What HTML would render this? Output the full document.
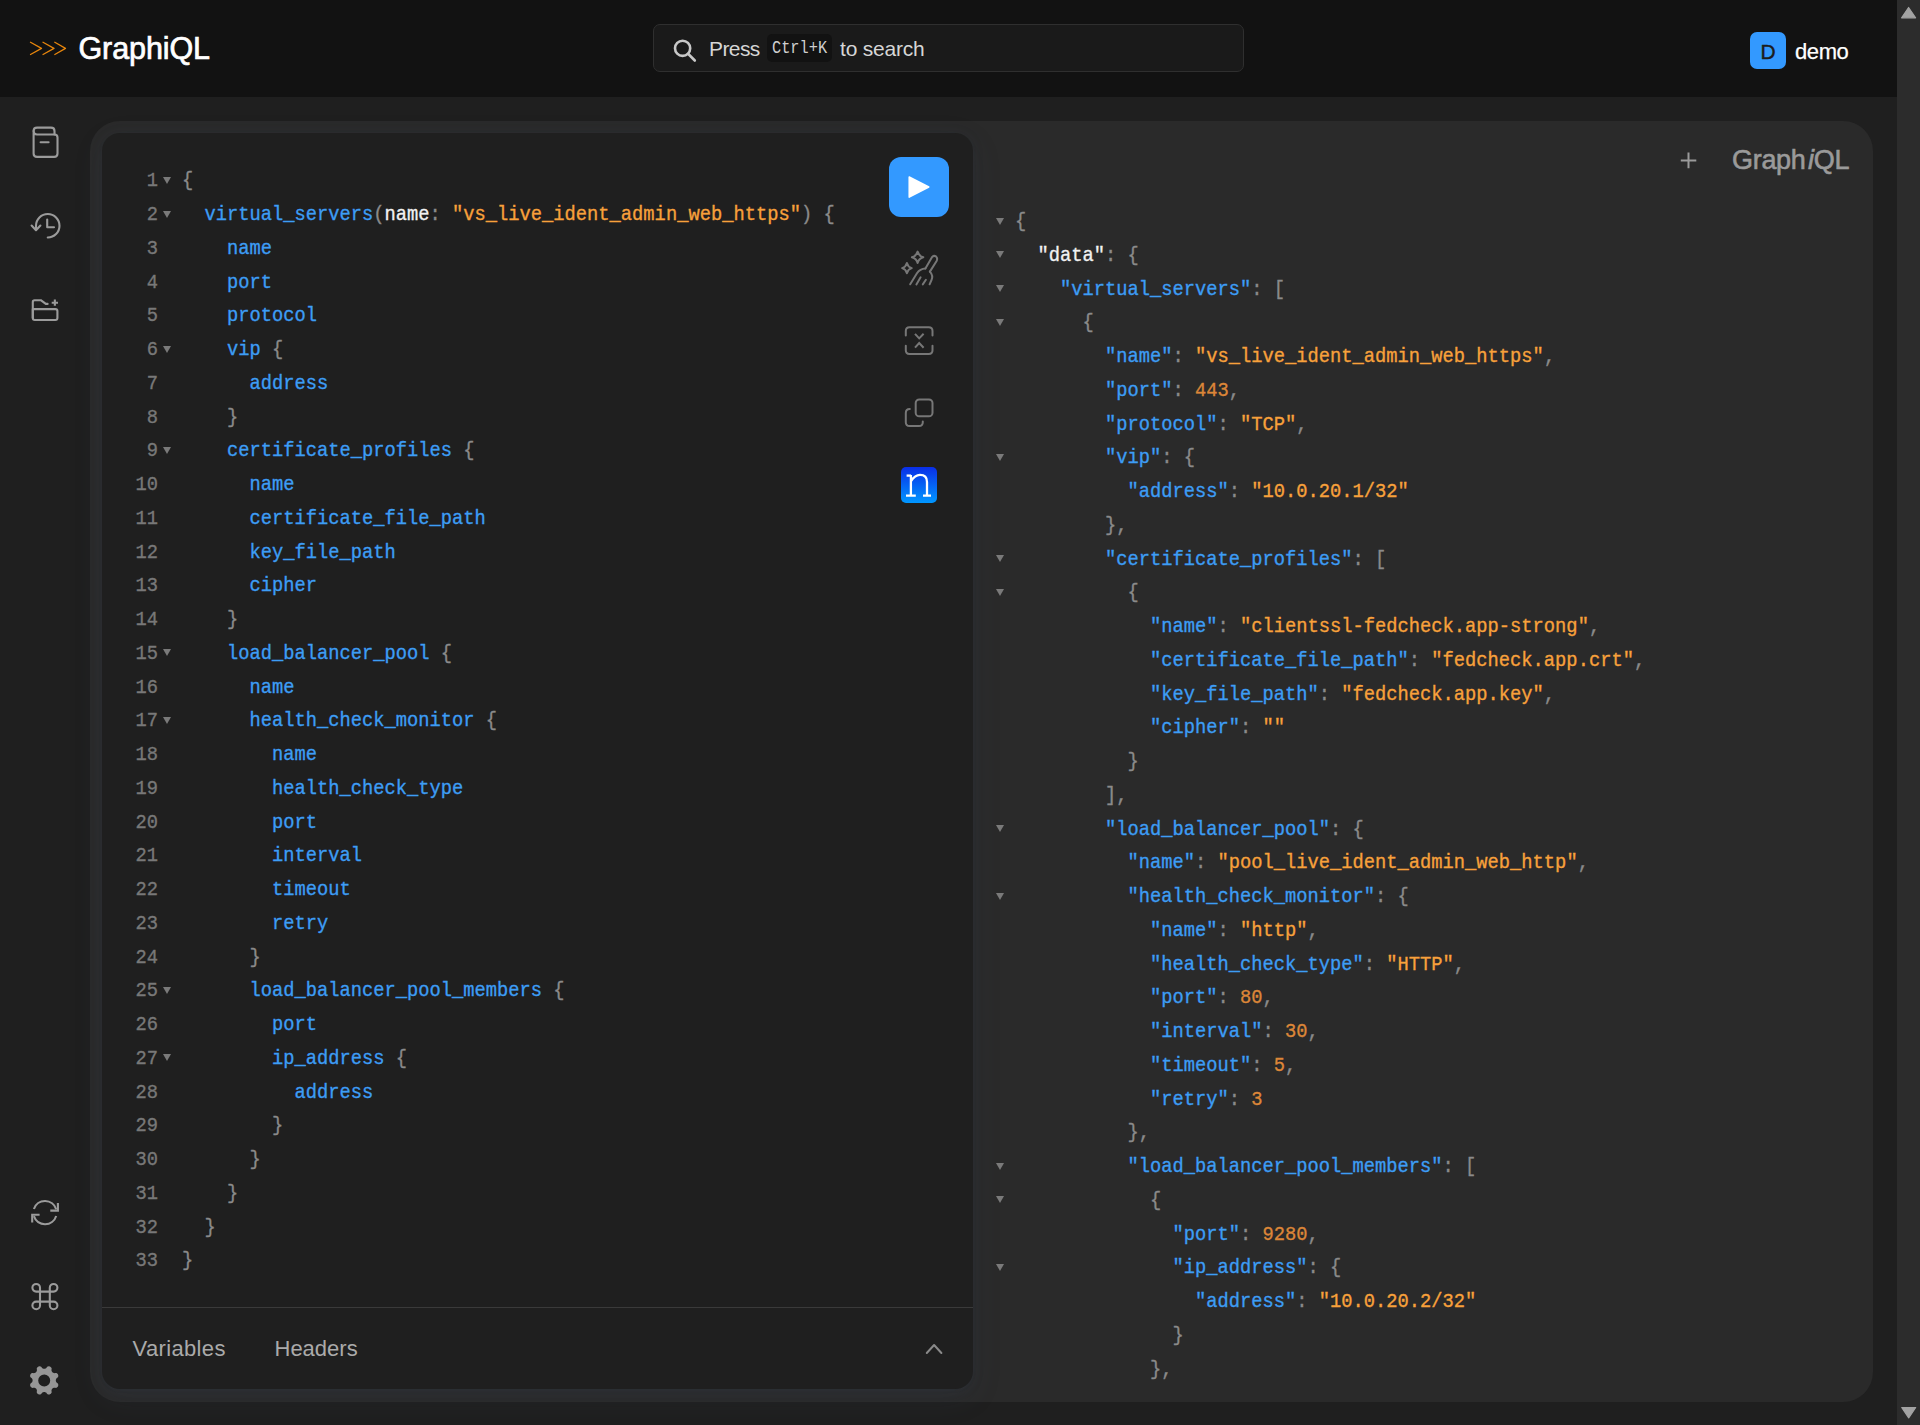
<!DOCTYPE html>
<html><head><meta charset="utf-8">
<style>
html,body{margin:0;padding:0;}
body{width:1920px;height:1425px;overflow:hidden;background:#1f1f1f;position:relative;font-family:"Liberation Sans",sans-serif;}
.abs{position:absolute;}
#hdr{position:absolute;left:0;top:0;width:1897px;height:97px;background:#121212;}
#sb{position:absolute;left:1897px;top:0;width:23px;height:1425px;background:#2c2c2c;}
#sess{position:absolute;left:90px;top:121px;width:1783px;height:1281px;background:#2a2a2a;border-radius:30px;}
#ed{position:absolute;left:102px;top:133px;width:871px;height:1256px;background:#1f1f1f;border-radius:18px;
  box-shadow:0 9px 30px rgba(59,76,106,0.13),0 1.8px 13px rgba(59,76,106,0.077),0 0.5px 4px rgba(59,76,106,0.05);}
#sep{position:absolute;left:102px;top:1307px;width:871px;height:1px;background:#3a3a3a;}
.code{position:absolute;font-family:"Liberation Mono",monospace;font-size:21px;line-height:33.75px;white-space:pre;transform:scaleX(0.89286);transform-origin:0 0;-webkit-text-stroke:0.35px currentColor;}
.code i{font-style:normal;}
.code .p{color:#8a8a8a;}
.code .f{color:#3d9df5;}
.code .k{color:#3d9df5;}
.code .a{color:#f2f2f2;}
.code .w{color:#f2f2f2;}
.code .s{color:#f8a13b;}
.code .n{color:#dc8638;}
.gut{position:absolute;font-family:"Liberation Mono",monospace;font-size:21px;line-height:33.75px;text-align:right;color:#787878;transform:scaleX(0.89286);transform-origin:100% 0;-webkit-text-stroke:0.35px currentColor;}
.fold{position:absolute;width:0;height:0;border-left:4.5px solid transparent;border-right:4.5px solid transparent;border-top:7px solid #7a7a7a;}
.txt{position:absolute;white-space:pre;line-height:1;}
</style></head><body>
<div id="hdr"></div>
<div id="sb"></div>
<div id="sess"></div>
<div id="ed"></div>
<div id="sep"></div>

<!-- header -->
<div class="abs" style="left:653px;top:24px;width:589px;height:46px;border:1px solid #2f2f2f;border-radius:7px;background:#1a1a1a;"></div>
<div class="abs" style="left:767px;top:34px;width:65px;height:28px;border-radius:5px;background:#121212;"></div>
<div class="txt" id="tPress" style="left:709px;top:38px;font-size:21px;letter-spacing:-0.6px;color:#d6d6d6;">Press</div>
<div class="txt" id="tCtrl" style="left:772px;top:38.5px;font-size:18px;transform:scaleX(0.85);transform-origin:0 0;color:#cfcfcf;font-family:'Liberation Mono',monospace;">Ctrl+K</div>
<div class="txt" id="tSearch" style="left:840px;top:38px;font-size:21px;letter-spacing:-0.2px;color:#d6d6d6;">to search</div>
<div class="txt" id="tLogo" style="left:78.5px;top:33px;font-size:30.5px;letter-spacing:-0.1px;color:#ffffff;-webkit-text-stroke:0.7px #fff;">GraphiQL</div>
<div class="abs" style="left:1750px;top:32px;width:36px;height:37px;border-radius:7px;background:#3399ff;"></div>
<div class="txt" id="tD" style="left:1760.5px;top:40.5px;font-size:21px;color:#1c1c1c;-webkit-text-stroke:0.4px #1c1c1c;">D</div>
<div class="txt" id="tDemo" style="left:1795px;top:40.5px;font-size:22px;letter-spacing:-0.4px;color:#ffffff;-webkit-text-stroke:0.25px #fff;">demo</div>

<!-- results header -->
<div class="txt" id="tGq" style="left:1732px;top:147px;font-size:27px;color:#9a9a9a;letter-spacing:-0.3px;-webkit-text-stroke:0.6px #9a9a9a;">Graph<span style="font-style:italic;margin-left:2.5px">i</span>QL</div>

<!-- bottom tabs -->
<div class="txt" id="tVar" style="left:132.5px;top:1337.5px;font-size:22px;letter-spacing:0.35px;color:#aaaaaa;">Variables</div>
<div class="txt" id="tHdr" style="left:274.5px;top:1337.5px;font-size:22px;color:#aaaaaa;">Headers</div>

<!-- run button -->
<div class="abs" style="left:889px;top:157px;width:60px;height:60px;border-radius:12px;background:#3399ff;"></div>
<!-- n icon -->
<div class="abs" style="left:901px;top:467px;width:36px;height:36px;border-radius:5px;background:linear-gradient(#0a2ee8,#0097ff);"></div>

<div class="gut" style="left:98px;top:164.4px;width:60px"><div class="gn">1</div><div class="gn">2</div><div class="gn">3</div><div class="gn">4</div><div class="gn">5</div><div class="gn">6</div><div class="gn">7</div><div class="gn">8</div><div class="gn">9</div><div class="gn">10</div><div class="gn">11</div><div class="gn">12</div><div class="gn">13</div><div class="gn">14</div><div class="gn">15</div><div class="gn">16</div><div class="gn">17</div><div class="gn">18</div><div class="gn">19</div><div class="gn">20</div><div class="gn">21</div><div class="gn">22</div><div class="gn">23</div><div class="gn">24</div><div class="gn">25</div><div class="gn">26</div><div class="gn">27</div><div class="gn">28</div><div class="gn">29</div><div class="gn">30</div><div class="gn">31</div><div class="gn">32</div><div class="gn">33</div></div>
<div class="fold" style="left:162.80px;top:176.88px"></div><div class="fold" style="left:162.80px;top:210.62px"></div><div class="fold" style="left:162.80px;top:345.62px"></div><div class="fold" style="left:162.80px;top:446.88px"></div><div class="fold" style="left:162.80px;top:649.38px"></div><div class="fold" style="left:162.80px;top:716.88px"></div><div class="fold" style="left:162.80px;top:986.88px"></div><div class="fold" style="left:162.80px;top:1054.38px"></div>
<div class="code q" style="left:181.5px;top:164.4px"><div class="ln"><i class="p">{</i></div><div class="ln">  <i class="f">virtual_servers</i><i class="p">(</i><i class="a">name</i><i class="p">: </i><i class="s">&quot;vs_live_ident_admin_web_https&quot;</i><i class="p">) {</i></div><div class="ln">    <i class="f">name</i></div><div class="ln">    <i class="f">port</i></div><div class="ln">    <i class="f">protocol</i></div><div class="ln">    <i class="f">vip</i><i class="p"> {</i></div><div class="ln">      <i class="f">address</i></div><div class="ln">    <i class="p">}</i></div><div class="ln">    <i class="f">certificate_profiles</i><i class="p"> {</i></div><div class="ln">      <i class="f">name</i></div><div class="ln">      <i class="f">certificate_file_path</i></div><div class="ln">      <i class="f">key_file_path</i></div><div class="ln">      <i class="f">cipher</i></div><div class="ln">    <i class="p">}</i></div><div class="ln">    <i class="f">load_balancer_pool</i><i class="p"> {</i></div><div class="ln">      <i class="f">name</i></div><div class="ln">      <i class="f">health_check_monitor</i><i class="p"> {</i></div><div class="ln">        <i class="f">name</i></div><div class="ln">        <i class="f">health_check_type</i></div><div class="ln">        <i class="f">port</i></div><div class="ln">        <i class="f">interval</i></div><div class="ln">        <i class="f">timeout</i></div><div class="ln">        <i class="f">retry</i></div><div class="ln">      <i class="p">}</i></div><div class="ln">      <i class="f">load_balancer_pool_members</i><i class="p"> {</i></div><div class="ln">        <i class="f">port</i></div><div class="ln">        <i class="f">ip_address</i><i class="p"> {</i></div><div class="ln">          <i class="f">address</i></div><div class="ln">        <i class="p">}</i></div><div class="ln">      <i class="p">}</i></div><div class="ln">    <i class="p">}</i></div><div class="ln">  <i class="p">}</i></div><div class="ln"><i class="p">}</i></div></div>
<div class="fold" style="left:995.80px;top:217.67px"></div><div class="fold" style="left:995.80px;top:251.42px"></div><div class="fold" style="left:995.80px;top:285.18px"></div><div class="fold" style="left:995.80px;top:318.93px"></div><div class="fold" style="left:995.80px;top:453.93px"></div><div class="fold" style="left:995.80px;top:555.18px"></div><div class="fold" style="left:995.80px;top:588.93px"></div><div class="fold" style="left:995.80px;top:825.18px"></div><div class="fold" style="left:995.80px;top:892.68px"></div><div class="fold" style="left:995.80px;top:1162.67px"></div><div class="fold" style="left:995.80px;top:1196.42px"></div><div class="fold" style="left:995.80px;top:1263.92px"></div>
<div class="code r" style="left:1014.8px;top:205.2px"><div class="ln"><i class="p">{</i></div><div class="ln">  <i class="w">&quot;data&quot;</i><i class="p">: {</i></div><div class="ln">    <i class="k">&quot;virtual_servers&quot;</i><i class="p">: </i><i class="p">[</i></div><div class="ln">      <i class="p">{</i></div><div class="ln">        <i class="k">&quot;name&quot;</i><i class="p">: </i><i class="s">&quot;vs_live_ident_admin_web_https&quot;</i><i class="p">,</i></div><div class="ln">        <i class="k">&quot;port&quot;</i><i class="p">: </i><i class="n">443</i><i class="p">,</i></div><div class="ln">        <i class="k">&quot;protocol&quot;</i><i class="p">: </i><i class="s">&quot;TCP&quot;</i><i class="p">,</i></div><div class="ln">        <i class="k">&quot;vip&quot;</i><i class="p">: </i><i class="p">{</i></div><div class="ln">          <i class="k">&quot;address&quot;</i><i class="p">: </i><i class="s">&quot;10.0.20.1/32&quot;</i></div><div class="ln">        <i class="p">},</i></div><div class="ln">        <i class="k">&quot;certificate_profiles&quot;</i><i class="p">: </i><i class="p">[</i></div><div class="ln">          <i class="p">{</i></div><div class="ln">            <i class="k">&quot;name&quot;</i><i class="p">: </i><i class="s">&quot;clientssl-fedcheck.app-strong&quot;</i><i class="p">,</i></div><div class="ln">            <i class="k">&quot;certificate_file_path&quot;</i><i class="p">: </i><i class="s">&quot;fedcheck.app.crt&quot;</i><i class="p">,</i></div><div class="ln">            <i class="k">&quot;key_file_path&quot;</i><i class="p">: </i><i class="s">&quot;fedcheck.app.key&quot;</i><i class="p">,</i></div><div class="ln">            <i class="k">&quot;cipher&quot;</i><i class="p">: </i><i class="s">&quot;&quot;</i></div><div class="ln">          <i class="p">}</i></div><div class="ln">        <i class="p">],</i></div><div class="ln">        <i class="k">&quot;load_balancer_pool&quot;</i><i class="p">: </i><i class="p">{</i></div><div class="ln">          <i class="k">&quot;name&quot;</i><i class="p">: </i><i class="s">&quot;pool_live_ident_admin_web_http&quot;</i><i class="p">,</i></div><div class="ln">          <i class="k">&quot;health_check_monitor&quot;</i><i class="p">: </i><i class="p">{</i></div><div class="ln">            <i class="k">&quot;name&quot;</i><i class="p">: </i><i class="s">&quot;http&quot;</i><i class="p">,</i></div><div class="ln">            <i class="k">&quot;health_check_type&quot;</i><i class="p">: </i><i class="s">&quot;HTTP&quot;</i><i class="p">,</i></div><div class="ln">            <i class="k">&quot;port&quot;</i><i class="p">: </i><i class="n">80</i><i class="p">,</i></div><div class="ln">            <i class="k">&quot;interval&quot;</i><i class="p">: </i><i class="n">30</i><i class="p">,</i></div><div class="ln">            <i class="k">&quot;timeout&quot;</i><i class="p">: </i><i class="n">5</i><i class="p">,</i></div><div class="ln">            <i class="k">&quot;retry&quot;</i><i class="p">: </i><i class="n">3</i></div><div class="ln">          <i class="p">},</i></div><div class="ln">          <i class="k">&quot;load_balancer_pool_members&quot;</i><i class="p">: </i><i class="p">[</i></div><div class="ln">            <i class="p">{</i></div><div class="ln">              <i class="k">&quot;port&quot;</i><i class="p">: </i><i class="n">9280</i><i class="p">,</i></div><div class="ln">              <i class="k">&quot;ip_address&quot;</i><i class="p">: </i><i class="p">{</i></div><div class="ln">                <i class="k">&quot;address&quot;</i><i class="p">: </i><i class="s">&quot;10.0.20.2/32&quot;</i></div><div class="ln">              <i class="p">}</i></div><div class="ln">            <i class="p">},</i></div></div>

<svg class="abs" style="left:0;top:0" width="1920" height="1425" viewBox="0 0 1920 1425" fill="none" stroke-linecap="round" stroke-linejoin="round">
 <!-- logo chevrons -->
 <g stroke="#e8860c" stroke-width="1.3">
  <path d="M30.5 42.3 L41.5 48.4 L30.5 54.5"/>
  <path d="M43 42.3 L54 48.4 L43 54.5"/>
  <path d="M54.8 42.3 L65.5 48.4 L54.8 54.5"/>
 </g>
 <!-- search icon -->
 <g stroke="#c8c8c8" stroke-width="2.6">
  <circle cx="682.6" cy="48.3" r="7.6"/>
  <path d="M688.3 54 L694.8 60.5"/>
 </g>
 <!-- sidebar icons -->
 <g stroke="#9b9b9b" stroke-width="2.1">
  <path d="M33.6 131 Q33.6 127.6 37 127.6 H51 Q54.5 127.6 54.5 131 V134.5"/>
  <path d="M33.6 131 V153.5 Q33.6 156.9 37 156.9 H54.2 Q57.5 156.9 57.5 153.5 V137.5 Q57.5 134.5 54.5 134.5 H37 Q33.6 134.5 33.6 131"/>
  <path d="M40.6 142.3 H48.6"/>
  <!-- history -->
  <path d="M47.75 237.5 A11.75 11.75 0 1 0 36 225.75 V229.5"/>
  <path d="M31.6 225.6 L36 230.2 L40.4 225.6"/>
  <path d="M47.2 219.6 V227.2 H54"/>
  <!-- folder plus -->
  <path d="M32.8 318 V302 Q32.8 300.2 34.6 300.2 H40.8 L45.8 303.9 H47.6"/>
  <path d="M32.8 309.1 H55.4 Q57.4 309.1 57.4 311.1 V318 Q57.4 320 55.4 320 H34.8 Q32.8 320 32.8 318 V309"/>
  <path d="M51.7 302.7 H58 M54.85 299.6 V305.8" stroke-linecap="butt"/>
  <!-- reload -->
  <path d="M33.9 1209 A11.7 11.7 0 0 1 56.2 1209.2" stroke-linecap="butt"/>
  <path d="M50.3 1210.6 H57.9 V1203" stroke-linecap="butt" stroke-linejoin="miter"/>
  <path d="M56.2 1216 A11.7 11.7 0 0 1 33.9 1216.2" stroke-linecap="butt"/>
  <path d="M39.6 1214.8 H32.2 V1222.5" stroke-linecap="butt" stroke-linejoin="miter"/>
  <!-- cmd -->
  <path d="M40 1287.8 V1305.4 A3.8 3.8 0 1 1 36.2 1301.6 H53.6 A3.8 3.8 0 1 1 49.8 1305.4 V1287.8 A3.8 3.8 0 1 1 53.6 1291.6 H36.2 A3.8 3.8 0 1 1 40 1287.8 Z"/>
 </g>
 <path fill="#969696" fill-rule="evenodd" d="M44.20 1368.80 L44.49 1368.79 L44.77 1368.74 L45.07 1368.67 L45.37 1368.56 L45.68 1368.42 L46.00 1368.24 L46.36 1367.98 L46.79 1367.36 L47.27 1366.75 L47.68 1366.53 L48.08 1366.40 L48.47 1366.33 L48.85 1366.31 L49.23 1366.35 L49.59 1366.42 L49.94 1366.54 L50.27 1366.70 L50.58 1366.91 L50.87 1367.15 L51.13 1367.43 L51.36 1367.76 L51.55 1368.13 L51.69 1368.58 L51.59 1369.34 L51.46 1370.09 L51.53 1370.52 L51.63 1370.88 L51.75 1371.21 L51.88 1371.49 L52.04 1371.75 L52.21 1371.99 L52.40 1372.20 L52.61 1372.39 L52.85 1372.56 L53.11 1372.72 L53.39 1372.85 L53.72 1372.97 L54.08 1373.07 L54.51 1373.14 L55.26 1373.01 L56.02 1372.91 L56.47 1373.05 L56.84 1373.24 L57.17 1373.47 L57.45 1373.73 L57.69 1374.02 L57.90 1374.33 L58.06 1374.66 L58.18 1375.01 L58.25 1375.37 L58.29 1375.75 L58.27 1376.13 L58.20 1376.52 L58.07 1376.92 L57.85 1377.33 L57.24 1377.81 L56.62 1378.24 L56.36 1378.60 L56.18 1378.92 L56.04 1379.23 L55.93 1379.53 L55.86 1379.83 L55.81 1380.11 L55.80 1380.40 L55.81 1380.69 L55.86 1380.97 L55.93 1381.27 L56.04 1381.57 L56.18 1381.88 L56.36 1382.20 L56.62 1382.56 L57.24 1382.99 L57.85 1383.47 L58.07 1383.88 L58.20 1384.28 L58.27 1384.67 L58.29 1385.05 L58.25 1385.43 L58.18 1385.79 L58.06 1386.14 L57.90 1386.47 L57.69 1386.78 L57.45 1387.07 L57.17 1387.33 L56.84 1387.56 L56.47 1387.75 L56.02 1387.89 L55.26 1387.79 L54.51 1387.66 L54.08 1387.73 L53.72 1387.83 L53.39 1387.95 L53.11 1388.08 L52.85 1388.24 L52.61 1388.41 L52.40 1388.60 L52.21 1388.81 L52.04 1389.05 L51.88 1389.31 L51.75 1389.59 L51.63 1389.92 L51.53 1390.28 L51.46 1390.71 L51.59 1391.46 L51.69 1392.22 L51.55 1392.67 L51.36 1393.04 L51.13 1393.37 L50.87 1393.65 L50.58 1393.89 L50.27 1394.10 L49.94 1394.26 L49.59 1394.38 L49.23 1394.45 L48.85 1394.49 L48.47 1394.47 L48.08 1394.40 L47.68 1394.27 L47.27 1394.05 L46.79 1393.44 L46.36 1392.82 L46.00 1392.56 L45.68 1392.38 L45.37 1392.24 L45.07 1392.13 L44.77 1392.06 L44.49 1392.01 L44.20 1392.00 L43.91 1392.01 L43.63 1392.06 L43.33 1392.13 L43.03 1392.24 L42.72 1392.38 L42.40 1392.56 L42.04 1392.82 L41.61 1393.44 L41.13 1394.05 L40.72 1394.27 L40.32 1394.40 L39.93 1394.47 L39.55 1394.49 L39.17 1394.45 L38.81 1394.38 L38.46 1394.26 L38.13 1394.10 L37.82 1393.89 L37.53 1393.65 L37.27 1393.37 L37.04 1393.04 L36.85 1392.67 L36.71 1392.22 L36.81 1391.46 L36.94 1390.71 L36.87 1390.28 L36.77 1389.92 L36.65 1389.59 L36.52 1389.31 L36.36 1389.05 L36.19 1388.81 L36.00 1388.60 L35.79 1388.41 L35.55 1388.24 L35.29 1388.08 L35.01 1387.95 L34.68 1387.83 L34.32 1387.73 L33.89 1387.66 L33.14 1387.79 L32.38 1387.89 L31.93 1387.75 L31.56 1387.56 L31.23 1387.33 L30.95 1387.07 L30.71 1386.78 L30.50 1386.47 L30.34 1386.14 L30.22 1385.79 L30.15 1385.43 L30.11 1385.05 L30.13 1384.67 L30.20 1384.28 L30.33 1383.88 L30.55 1383.47 L31.16 1382.99 L31.78 1382.56 L32.04 1382.20 L32.22 1381.88 L32.36 1381.57 L32.47 1381.27 L32.54 1380.97 L32.59 1380.69 L32.60 1380.40 L32.59 1380.11 L32.54 1379.83 L32.47 1379.53 L32.36 1379.23 L32.22 1378.92 L32.04 1378.60 L31.78 1378.24 L31.16 1377.81 L30.55 1377.33 L30.33 1376.92 L30.20 1376.52 L30.13 1376.13 L30.11 1375.75 L30.15 1375.37 L30.22 1375.01 L30.34 1374.66 L30.50 1374.33 L30.71 1374.02 L30.95 1373.73 L31.23 1373.47 L31.56 1373.24 L31.93 1373.05 L32.38 1372.91 L33.14 1373.01 L33.89 1373.14 L34.32 1373.07 L34.68 1372.97 L35.01 1372.85 L35.29 1372.72 L35.55 1372.56 L35.79 1372.39 L36.00 1372.20 L36.19 1371.99 L36.36 1371.75 L36.52 1371.49 L36.65 1371.21 L36.77 1370.88 L36.87 1370.52 L36.94 1370.09 L36.81 1369.34 L36.71 1368.58 L36.85 1368.13 L37.04 1367.76 L37.27 1367.43 L37.53 1367.15 L37.82 1366.91 L38.13 1366.70 L38.46 1366.54 L38.81 1366.42 L39.17 1366.35 L39.55 1366.31 L39.93 1366.33 L40.32 1366.40 L40.72 1366.53 L41.13 1366.75 L41.61 1367.36 L42.04 1367.98 L42.40 1368.24 L42.72 1368.42 L43.03 1368.56 L43.33 1368.67 L43.63 1368.74 L43.91 1368.79 Z M 50.20 1380.40 A 6.00 6.00 0 1 0 38.20 1380.40 A 6.00 6.00 0 1 0 50.20 1380.40 Z"/>
 <!-- toolbar icons -->
 <path fill="#ffffff" stroke="#ffffff" stroke-width="1.5" d="M909.2 177 L928.8 187 L909.2 197.2 Z"/>
 <g stroke="#777777" stroke-width="2">
  <path d="M917.6 251.6 Q918.8 256.1 923.3 257.3 Q918.8 258.5 917.6 263 Q916.4 258.5 911.9 257.3 Q916.4 256.1 917.6 251.6 Z"/>
  <path d="M906.9 263 Q907.9 267 911.8 268.1 Q907.9 269.2 906.9 273.2 Q905.9 269.2 902.1 268.1 Q905.9 267 906.9 263 Z"/>
  <path d="M925.4 268.5 L931.8 257.4 Q933.6 255 936 256.4 Q938 258.2 936.6 261 L929.9 271.6"/>
  <path d="M925.4 268.5 Q920 268.6 916.8 273.5 L910.2 284.3"/>
  <path d="M929.9 271.6 Q933.5 275.5 931.5 280 L929.6 284.3"/>
  <path d="M920.6 277.3 L916.4 284.4 M925.9 279.8 L922.8 284.4"/>
  <!-- merge -->
  <path d="M905.8 335.6 V331 Q905.8 327.3 909.5 327.3 H928.8 Q932.5 327.3 932.5 331 V335.6"/>
  <path d="M905.8 345.8 V350.3 Q905.8 354 909.5 354 H928.8 Q932.5 354 932.5 350.3 V345.8"/>
  <path d="M915 333.8 L919.2 338.4 L923.6 333.8 M915 347.7 L919.2 343 L923.6 347.7" stroke-linecap="butt" stroke-linejoin="miter"/>
  <!-- copy -->
  <rect x="915.7" y="399.5" width="16.8" height="16.8" rx="3.6"/>
  <path d="M909.8 409 Q905.8 409 905.8 413 V422.2 Q905.8 426 909.6 426 H919 Q922.8 426 922.8 422.2 V421.4"/>
 </g>
 <!-- n icon letter -->
 <g stroke="#ffffff" stroke-width="2.3" stroke-linecap="butt">
  <path d="M910.9 475 V495.5"/>
  <path d="M906.6 475.6 H911"/>
  <path d="M906 495.6 H915.8 M923 495.6 H931"/>
  <path d="M911 481 Q915 475 920 474.9 Q927 474.9 927 482 V495.5"/>
 </g>
 <!-- results + -->
 <path d="M1688.5 152.6 V168.2 M1680.8 160.4 H1696.3" stroke="#9a9a9a" stroke-width="2" stroke-linecap="butt"/>
 <!-- up chevron -->
 <path d="M926.8 1353 L934.1 1345 L941.4 1353" stroke="#8a8a8a" stroke-width="2"/>
 <!-- scrollbar arrows -->
 <path d="M1908.6 7.5 L1915.6 17.8 H1901.6 Z" fill="#a3a3a3" stroke="#a3a3a3" stroke-width="1.2"/>
 <path d="M1908.7 1417.8 L1915.7 1407.5 H1901.7 Z" fill="#a3a3a3" stroke="#a3a3a3" stroke-width="1.2"/>
</svg>
</body></html>
